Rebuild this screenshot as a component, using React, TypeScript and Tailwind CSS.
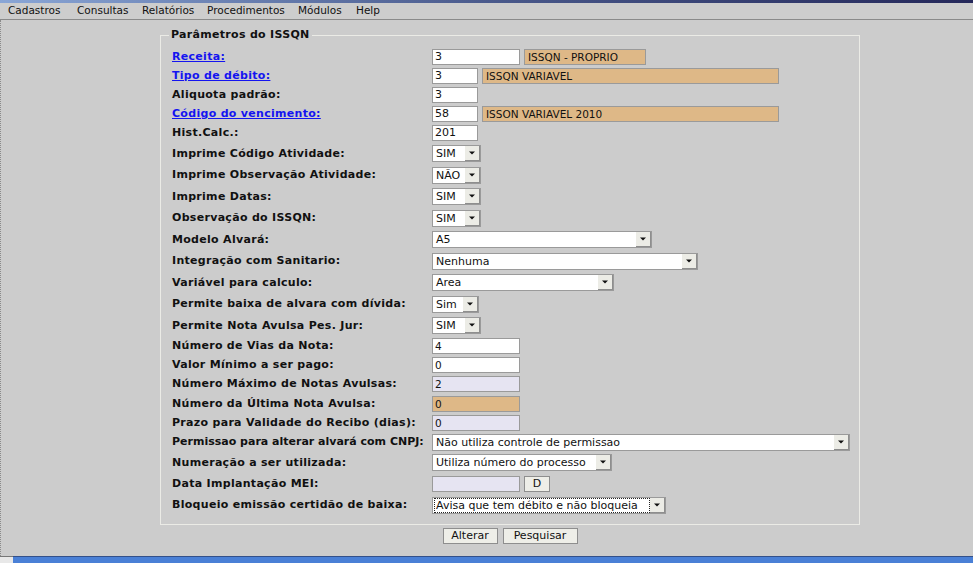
import React from "react";

type Row =
  | { kind: "text"; label: string; link?: boolean; h: number; value: string; w: number; bg?: string; desc?: string; descW?: number; small?: boolean; button?: string; tight?: boolean }
  | { kind: "select"; label: string; link?: boolean; h: number; value: string; w: number; focus?: boolean; tight?: boolean };

const rows: Row[] = [
  { kind: "text", label: "Receita:", link: true, h: 19.2, value: "3", w: 88, desc: "ISSQN - PROPRIO", descW: 122 },
  { kind: "text", label: "Tipo de débito:", link: true, h: 19.2, value: "3", w: 46, desc: "ISSQN VARIAVEL", descW: 297 },
  { kind: "text", label: "Aliquota padrão:", h: 19.2, value: "3", w: 46 },
  { kind: "text", label: "Código do vencimento:", link: true, h: 19.2, value: "58", w: 46, desc: "ISSON VARIAVEL 2010", descW: 297 },
  { kind: "text", label: "Hist.Calc.:", h: 19.2, value: "201", w: 46 },
  { kind: "select", label: "Imprime Código Atividade:", h: 21.5, value: "SIM", w: 49 },
  { kind: "select", label: "Imprime Observação Atividade:", h: 21.5, value: "NÃO", w: 49 },
  { kind: "select", label: "Imprime Datas:", h: 21.5, value: "SIM", w: 49 },
  { kind: "select", label: "Observação do ISSQN:", h: 21.5, value: "SIM", w: 49 },
  { kind: "select", label: "Modelo Alvará:", h: 21.5, value: "A5", w: 220 },
  { kind: "select", label: "Integração com Sanitario:", h: 21.5, value: "Nenhuma", w: 266 },
  { kind: "select", label: "Variável para calculo:", h: 21.5, value: "Area", w: 182 },
  { kind: "select", label: "Permite baixa de alvara com dívida:", h: 21.5, value: "Sim", w: 47 },
  { kind: "select", label: "Permite Nota Avulsa Pes. Jur:", h: 21.5, value: "SIM", w: 49 },
  { kind: "text", label: "Número de Vias da Nota:", h: 19.2, value: "4", w: 88, small: true },
  { kind: "text", label: "Valor Mínimo a ser pago:", h: 19.2, value: "0", w: 88, small: true },
  { kind: "text", label: "Número Máximo de Notas Avulsas:", h: 19.2, value: "2", w: 88, bg: "lav", small: true },
  { kind: "text", label: "Número da Última Nota Avulsa:", h: 19.2, value: "0", w: 88, bg: "tan", small: true },
  { kind: "text", label: "Prazo para Validade do Recibo (dias):", h: 19.2, value: "0", w: 88, bg: "lav", small: true },
  { kind: "select", label: "Permissao para alterar alvará com CNPJ:", h: 19.5, value: "Não utiliza controle de permissao", w: 418, tight: true },
  { kind: "select", label: "Numeração a ser utilizada:", h: 21.5, value: "Utiliza número do processo", w: 180 },
  { kind: "text", label: "Data Implantação MEI:", h: 21, value: "", w: 88, bg: "lav", button: "D" },
  { kind: "select", label: "Bloqueio emissão certidão de baixa:", h: 21.5, value: "Avisa que tem débito e não bloqueia", w: 234, focus: true },
];

function Arrow() {
  return (
    <div className="w-[15px] h-full bg-[#ecece6] border-r border-b border-[#8e8e8e] flex items-center justify-center shrink-0">
      <svg width="6" height="4" viewBox="0 0 6 4">
        <path d="M0 0.5 H6 L3 3.5 Z" fill="#111" />
      </svg>
    </div>
  );
}

function Select({ value, w, focus }: { value: string; w: number; focus?: boolean }) {
  return (
    <div
      className="h-[17px] border border-[#9a9a9a] bg-white flex items-stretch text-[11px] leading-[15px] text-[#111]"
      style={{ width: w }}
    >
      <div className="flex-1 min-w-0 flex items-center pl-[3px] overflow-hidden whitespace-nowrap">
        {focus ? (
          <span className="border border-dotted border-[#222] h-[15px] flex items-center pl-[1px] pr-[2px] -ml-[2px] flex-1">
            {value}
          </span>
        ) : (
          value
        )}
      </div>
      <Arrow />
    </div>
  );
}

function TextBox({ value, w, bg, small }: { value: string; w: number; bg?: string; small?: boolean }) {
  const bgc = bg === "lav" ? "bg-[#e6e4f2]" : bg === "tan" ? "bg-[#deb887]" : "bg-white";
  return (
    <div
      className={`h-[16px] border border-[#9a9a9a] ${bgc} flex items-center pl-[2px] text-[#111] ${small ? "text-[10.5px]" : "text-[11px]"} leading-[14px] whitespace-nowrap overflow-hidden`}
      style={{ width: w }}
    >
      {value}
    </div>
  );
}

function Desc({ value, w }: { value: string; w: number }) {
  return (
    <div
      className="ml-[4px] h-[16px] border border-[#9a9a9a] bg-[#deb887] flex items-center pl-[3px] text-[10.5px] leading-[14px] text-[#111] whitespace-nowrap"
      style={{ width: w }}
    >
      {value}
    </div>
  );
}

export default function App() {
  return (
    <div className="w-[973px] h-[563px] bg-[#cccccc] flex flex-col overflow-hidden font-['DejaVu_Sans',Verdana,sans-serif] text-black">
      <div className="h-[3px] shrink-0 bg-linear-to-r from-[#8aa6d6] via-[#4a5a8c] to-[#25285a]" />
      <div className="h-[17px] shrink-0 border-b border-[#8a8a8a] flex items-center pl-[8px] text-[10.5px] text-[#111] bg-[#cdcdcd]">
        <span className="w-[69px]">Cadastros</span>
        <span className="w-[65px]">Consultas</span>
        <span className="w-[65px]">Relatórios</span>
        <span className="w-[91px]">Procedimentos</span>
        <span className="w-[58px]">Módulos</span>
        <span>Help</span>
      </div>
      <div className="flex-1 flex min-h-0">
        <div className="w-[3px] shrink-0 border-l border-dotted border-[#8a8a8a]" />
        <div className="flex-1 flex flex-col">
          <fieldset className="ml-[157px] w-[700px] mt-[7px] border border-[#ebebe6] pl-[11px] pt-[4px] pb-[8px]">
            <legend className="px-[2px] -ml-[3px] text-[11px] font-bold leading-[16px] text-[#111] tracking-[0.3px]">
              Parâmetros do ISSQN
            </legend>
            <div className="flex flex-col">
              {rows.map((r, i) => (
                <div key={i} className="flex items-center" style={{ height: r.h }}>
                  <div
                    className={`w-[260px] shrink-0 text-[11px] font-bold leading-[14px] whitespace-nowrap ${
                      r.tight ? "tracking-[0px]" : "tracking-[0.3px]"
                    } ${r.link ? "text-[#1414f0] underline" : "text-[#111]"}`}
                  >
                    {r.label}
                  </div>
                  <div className="flex items-center">
                    {r.kind === "text" ? (
                      <>
                        <TextBox value={r.value} w={r.w} bg={r.bg} small={r.small} />
                        {r.desc && <Desc value={r.desc} w={r.descW!} />}
                        {r.button && (
                          <div className="ml-[4px] w-[26px] h-[16px] border border-[#8e8e8e] bg-[#eeeee8] flex items-center justify-center text-[11px] text-[#111]">
                            {r.button}
                          </div>
                        )}
                      </>
                    ) : (
                      <Select value={r.value} w={r.w} focus={r.focus} />
                    )}
                  </div>
                </div>
              ))}
            </div>
          </fieldset>
          <div className="mt-[3px] flex justify-center gap-[5px] w-[700px] ml-[157px]">
            <div className="w-[55px] h-[16px] border border-[#8e8e8e] bg-[#eeeee8] flex items-center justify-center text-[11px] text-[#111]">
              Alterar
            </div>
            <div className="w-[75px] h-[16px] border border-[#8e8e8e] bg-[#eeeee8] flex items-center justify-center text-[11px] text-[#111]">
              Pesquisar
            </div>
          </div>
        </div>
      </div>
      <div className="h-[7px] shrink-0 flex">
        <div className="w-[13px] bg-[#e8e8e8] border-t border-[#777]" />
        <div className="flex-1 bg-[#4a80d6] border-t border-[#33508a]" />
      </div>
    </div>
  );
}
